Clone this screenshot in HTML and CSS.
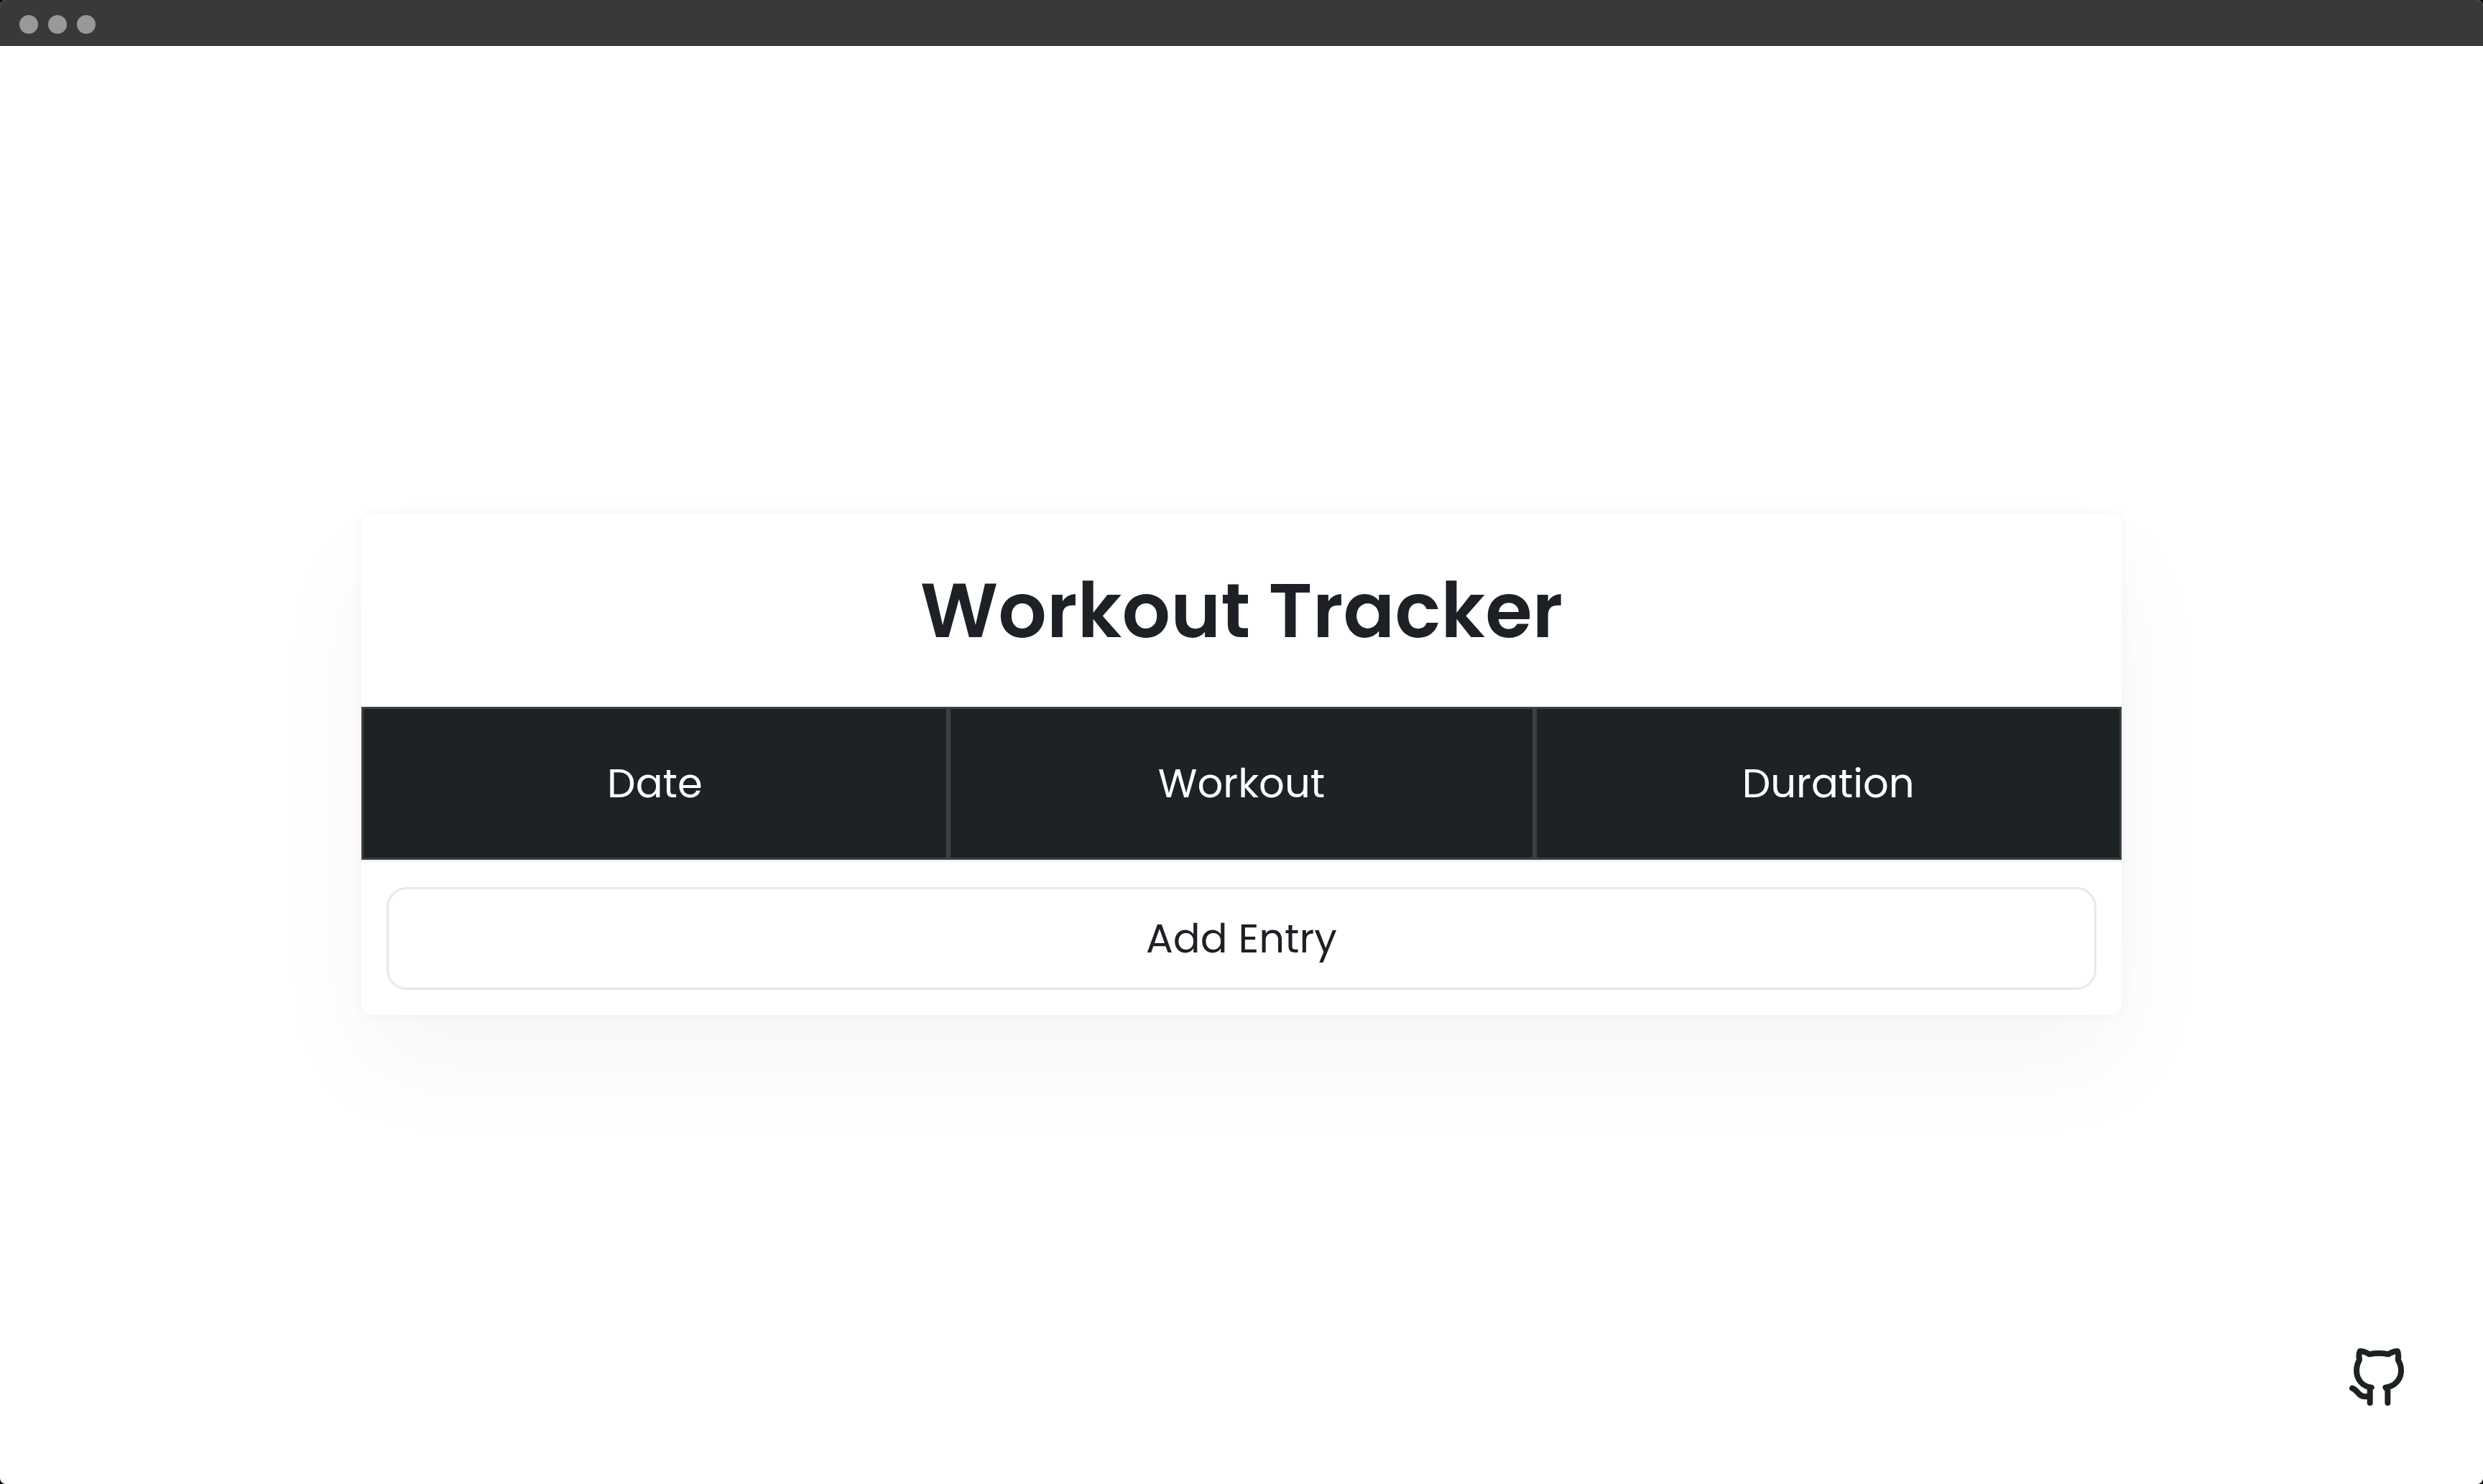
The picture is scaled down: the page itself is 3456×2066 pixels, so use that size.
FILE: index.html
```html
<!DOCTYPE html>
<html lang="en">
<head>
  <meta charset="utf-8">
  <meta name="viewport" content="width=device-width, initial-scale=1">
  <title>Workout Tracker</title>
  <link rel="stylesheet" href="styles.css">
</head>
<body>
  <div class="window">
    <header class="titlebar">
      <span class="dot"></span>
      <span class="dot"></span>
      <span class="dot"></span>
    </header>
    <main class="page">
      <section class="card">
        <h1 class="title">Workout Tracker</h1>
        <table class="log">
          <thead>
            <tr>
              <th scope="col">Date</th>
              <th scope="col">Workout</th>
              <th scope="col">Duration</th>
            </tr>
          </thead>
        </table>
        <div class="actions">
          <button class="add" type="button">Add Entry</button>
        </div>
      </section>
    </main>
    <a class="github" href="#" aria-label="GitHub">
      <svg viewBox="87 78 234 246" fill="none" stroke="currentColor" stroke-width="24" stroke-linecap="round" stroke-linejoin="round">
        <path d="M176 309V256C176 251 178 248 182 245C143 240 120 210 120 174C120 158 125 142 132 130C129 118 130 104 134 93C149 93 160 98 173 106C199 101 227 101 253 106C266 98 276 93 291 93C295 104 296 118 293 130C301 142 306 158 306 174C306 210 282 240 241 245C247 249 250 254 250 262V309"/>
        <path d="M102 248C126 256 126 283 156 283H174"/>
      </svg>
    </a>
  </div>
</body>
</html>
```
FILE: styles.css
```css
* {
  box-sizing: border-box;
}

body {
  margin: 0;
  background: #000;
  color: #1d2125;
  font-family: Poppins, Inter, sans-serif;
}

.window {
  display: flex;
  flex-direction: column;
  min-height: 100vh;
  overflow: hidden;
  border-radius: 8px;
  background: #fff;
}

.titlebar {
  display: flex;
  align-items: center;
  gap: 14px;
  height: 64px;
  padding: 4px 27px 0;
  background: #38393b;
}

.dot {
  width: 26px;
  height: 26px;
  border-radius: 50%;
  background: #98999b;
}

.page {
  display: flex;
  flex: 1;
  flex-direction: column;
  justify-content: center;
  padding: 0 503px 2px;
}

.card {
  border-radius: 14px;
  background: #fff;
  box-shadow: 0 0 18px rgba(0, 0, 0, 0.04), 0 70px 150px rgba(0, 0, 0, 0.04);
}

.title {
  margin: 0;
  padding: 54px 0;
  font-size: 106px;
  font-weight: 600;
  line-height: 160px;
  text-align: center;
}

.log {
  width: 100%;
  table-layout: fixed;
  border-spacing: 0;
  border-bottom: 3px solid #f2f2f4;
  background: #1d2225;
  background-clip: padding-box;
  color: #fff;
}

.log th {
  height: 213px;
  padding: 2px 0 0;
  border: 3px solid #3d4042;
  font-size: 56px;
  font-weight: 400;
  line-height: 84px;
}

.actions {
  padding: 35px;
}

.add {
  display: block;
  width: 100%;
  padding: 26px;
  border: 3px solid #e9e9e9;
  border-radius: 28px;
  background: #fff;
  color: inherit;
  font: inherit;
  font-size: 56px;
  line-height: 85px;
}

.github {
  position: fixed;
  right: 109px;
  bottom: 108px;
  color: #1d2225;
}

.github svg {
  display: block;
  width: 78px;
  height: 82px;
}
```
